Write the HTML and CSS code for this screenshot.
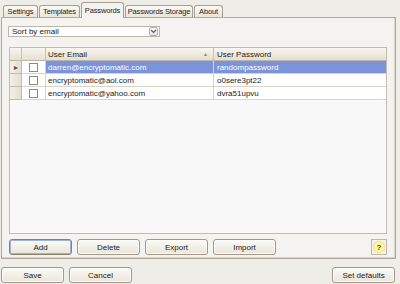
FILE: index.html
```html
<!DOCTYPE html>
<html lang="en">

<head>
  <meta charset="UTF-8">
  <title>Passwords</title>
  <link rel="stylesheet" href="styles.css">
</head>

<body>
  <main class="window">
    <nav class="tabs">
      <span class="tab tab-settings">Settings</span>
      <span class="tab tab-templates">Templates</span>
      <span class="tab tab-active">Passwords</span>
      <span class="tab tab-storage">Passwords Storage</span>
      <span class="tab tab-about">About</span>
    </nav>

    <section class="panel">
      <div class="combo">
        <span class="combo-text">Sort by email</span>
        <span class="combo-btn">
          <svg width="7" height="5" viewBox="0 0 7 5">
            <path d="M1 1 L3.5 3.5 L6 1" fill="none" stroke="#4d6185" stroke-width="1.2" />
          </svg>
        </span>
      </div>

      <div class="grid">
        <div class="row row-head">
          <span class="cell c-hdr"></span>
          <span class="cell c-check"></span>
          <span class="cell c-email">User Email <i class="sort-arrow">▲</i></span>
          <span class="cell c-pass">User Password</span>
        </div>
        <div class="row row-selected">
          <span class="cell c-hdr"><i class="pointer">▸</i></span>
          <span class="cell c-check"><i class="box"></i></span>
          <span class="cell c-email">darren@encryptomatic.com</span>
          <span class="cell c-pass">randompassword</span>
        </div>
        <div class="row">
          <span class="cell c-hdr"></span>
          <span class="cell c-check"><i class="box"></i></span>
          <span class="cell c-email">encryptomatic@aol.com</span>
          <span class="cell c-pass">o0sere3pt22</span>
        </div>
        <div class="row">
          <span class="cell c-hdr"></span>
          <span class="cell c-check"><i class="box"></i></span>
          <span class="cell c-email">encryptomatic@yahoo.com</span>
          <span class="cell c-pass">dvra51upvu</span>
        </div>
      </div>

      <div class="actions">
        <button class="btn btn-focus">Add</button>
        <button class="btn">Delete</button>
        <button class="btn">Export</button>
        <button class="btn">Import</button>
        <button class="help">?</button>
      </div>
    </section>

    <footer class="footer">
      <button class="btn">Save</button>
      <button class="btn">Cancel</button>
      <button class="btn btn-right">Set defaults</button>
    </footer>
  </main>
</body>

</html>
```

FILE: styles.css
```css
*,
*::before,
*::after {
  box-sizing: border-box;
}

:root {
  /* COLORS */
  --bg: #efede7;
  --panel-bg: #f4f3ef;
  --grid-bg: #f8f8f8;
  --line: #d8d4c8;
  --text: #222222;
  --selected: #7b93d9;

  --ff-primary: "Liberation Sans", Arial, sans-serif;
}

body {
  margin: 0;
  width: 400px;
  height: 284px;
  overflow: hidden;

  font-family: var(--ff-primary);
  font-size: 8px;
  color: var(--text);

  background-color: var(--bg);
}

.window {
  display: flex;
  flex-direction: column;
}

/* TABS */
.tabs {
  display: flex;
  align-items: flex-end;
  gap: 1px;

  height: 17px;
  padding-left: 3px;
}

.tab {
  display: flex;
  align-items: center;
  justify-content: center;

  height: 12px;
  padding: 0;

  border: 1px solid #a99e92;
  border-bottom: none;
  border-radius: 3px 3px 0 0;

  font-size: 7.5px;
  letter-spacing: -0.15px;
  white-space: nowrap;

  background: linear-gradient(#fbfaf6, #e8e5da);
}

.tab-settings {
  width: 35px;
}

.tab-templates {
  width: 41px;
}

.tab-storage {
  width: 68px;
}

.tab-about {
  width: 29px;
}

.tab-active {
  position: relative;
  z-index: 2;

  width: 43px;
  height: 16px;
  margin-bottom: -1px;

  background: var(--panel-bg);
}

/* PANEL */
.panel {
  display: flex;
  flex-direction: column;

  width: 395px;
  height: 242px;
  margin-left: 1px;
  padding: 8px 6px 0 6px;

  border: 1px solid #b3a89c;
  box-shadow: inset -1px -1px 0 #d9d3c8;

  background-color: var(--panel-bg);
}

.combo {
  display: flex;
  align-items: center;
  justify-content: space-between;

  width: 152px;
  height: 11px;
  padding: 0 1px 0 3px;

  border: 1px solid #bdb7ab;

  background-color: #ffffff;
}

.combo-btn {
  display: grid;
  place-items: center;

  width: 9px;
  height: 9px;

  border: 1px solid #b6b0a5;
  border-radius: 2px;

  background: linear-gradient(#ffffff, #e6e3da);
}

/* GRID */
.grid {
  display: flex;
  flex-direction: column;

  width: 378px;
  height: 187px;
  margin-top: 10px;
  margin-left: 1px;

  border: 1px solid #c4bcb0;

  background-color: var(--grid-bg);
}

.row {
  display: flex;

  height: 13px;
}

.cell {
  display: flex;
  align-items: center;

  border-right: 1px solid var(--line);
  border-bottom: 1px solid var(--line);
}

.c-hdr {
  justify-content: center;

  width: 12px;

  border-right: 1px solid #c2baad;
  border-bottom-color: #c2baad;

  background: linear-gradient(90deg, #f2efe6, #e3dfd2);
}

.c-check {
  justify-content: center;

  width: 24px;

  background-color: #ffffff;
}

.c-email {
  justify-content: space-between;

  width: 168px;
  padding-left: 2px;
  padding-right: 5px;

  background-color: #ffffff;
}

.c-pass {
  flex: 1;

  padding-left: 3px;

  background-color: #ffffff;
  border-right: none;
}

.row-head .cell {
  height: 13px;

  border-right-color: #c8c1b3;
  border-bottom: 1px solid #bfb6a6;

  background: linear-gradient(#f8f6ef, #e4dfd1);
}

.sort-arrow {
  font-style: normal;
  font-size: 5px;
  color: #8a8476;
}

.row-selected .c-email,
.row-selected .c-pass {
  color: #ffffff;
  background-color: var(--selected);
}

.pointer {
  font-style: normal;
  font-size: 8px;
  color: #555049;
}

.box {
  width: 9px;
  height: 9px;

  border: 1px solid #8f8a80;

  background-color: #ffffff;
}

/* BUTTONS */
.actions {
  display: flex;
  gap: 5px;

  margin-top: 5px;
  padding-left: 1px;
}

.btn {
  width: 63px;
  height: 16px;
  padding: 0;

  border: 1px solid #a5968a;
  border-radius: 3px;

  font-family: inherit;
  font-size: 8px;
  color: var(--text);

  background: linear-gradient(#fbfaf5, #e9e5d9);
  box-shadow: inset 0 0 0 1px #fdfcf8;
}

.btn-focus {
  border-color: #8a7f74;
  box-shadow: inset 0 0 0 1px #9db3e0;
}

.help {
  display: grid;
  place-items: center;

  width: 16px;
  height: 16px;
  margin-left: auto;
  margin-right: 2px;
  padding: 0;

  border: 1px solid #bdb7ad;

  font-family: inherit;
  font-size: 8px;
  font-weight: bold;
  color: #5a4a00;

  background: radial-gradient(#fff7a6 45%, #f2e08a 60%, #f4f2ec 62%);
}

.footer {
  display: flex;
  gap: 5px;

  margin-top: 8px;
  padding-left: 1px;
  padding-right: 5px;
}

.btn-right {
  margin-left: auto;
}
```
